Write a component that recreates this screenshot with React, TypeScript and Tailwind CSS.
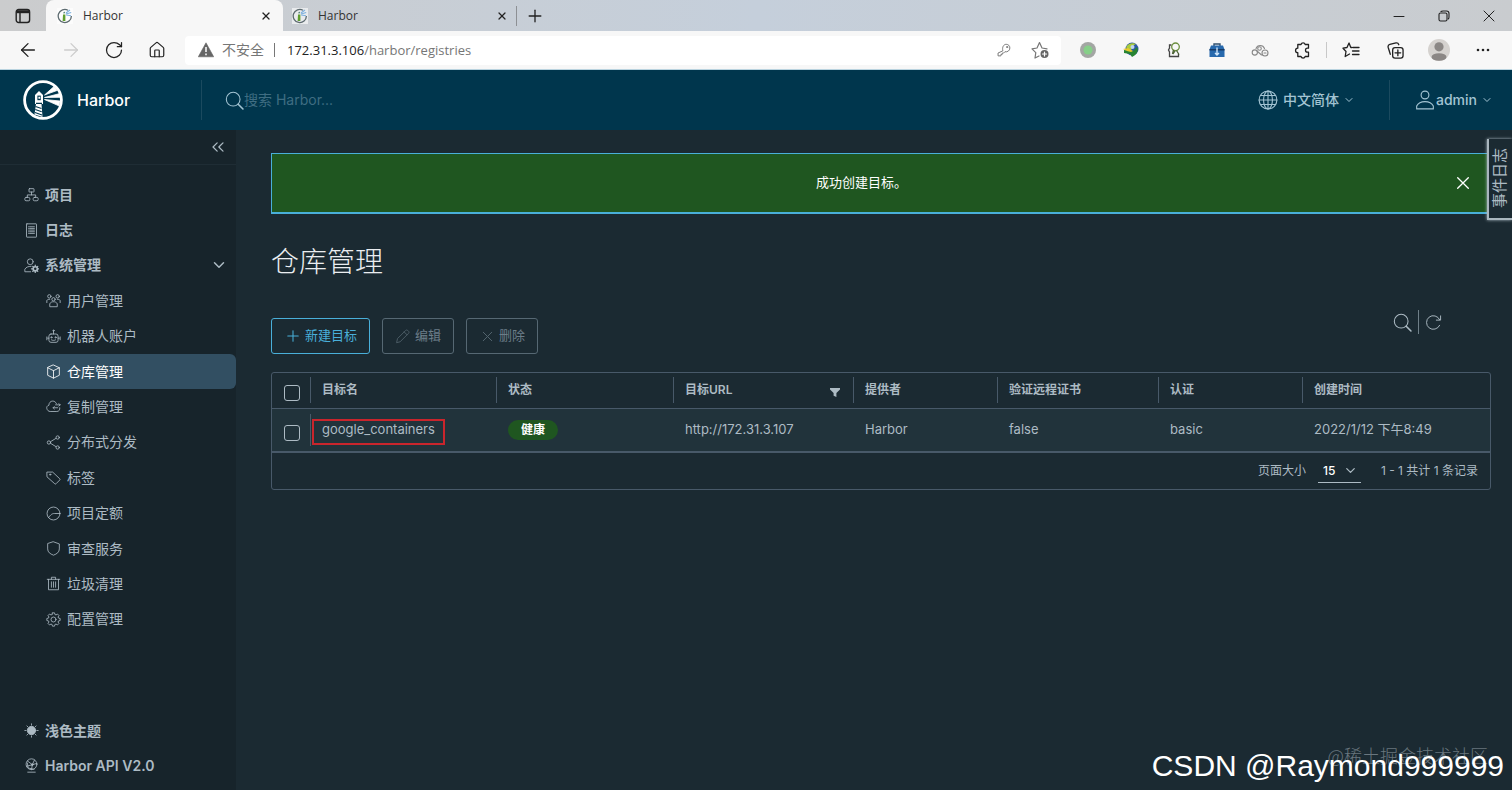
import React, { useState } from 'react';
import {
  ArrowLeft,
  ArrowRight,
  ChevronDown,
  ChevronsLeft,
  House,
  Plus,
  RotateCw,
  X,
} from 'lucide-react';

type IconProps = { className?: string; children?: React.ReactNode; viewBox?: string; strokeWidth?: number };

// Base for all outline icons, drawn on a 36 unit grid
const Icon: React.FC<IconProps> = ({ className = 'w-4 h-4', viewBox = '0 0 36 36', strokeWidth = 2, children }) => (
  <svg
    viewBox={viewBox}
    fill="none"
    stroke="currentColor"
    strokeWidth={strokeWidth}
    strokeLinecap="round"
    strokeLinejoin="round"
    className={`shrink-0 ${className}`}
    aria-hidden="true"
  >
    {children}
  </svg>
);

const GEAR =
  'M15.5 3h5l.9 4 2.6 1.1 3.5-2.2 3.6 3.6-2.2 3.5L30 15.6l4 .9v5l-4 .9-1.1 2.6 2.2 3.5-3.6 3.6-3.5-2.2-2.6 1.1-.9 4h-5l-.9-4-2.6-1.1-3.5 2.2-3.6-3.6L7.1 25 6 22.4l-4-.9v-5l4-.9L7.1 13 4.9 9.5l3.6-3.6L12 8.1 14.6 7z';

const icons = {
  projects: (
    <>
      <rect x="12" y="4" width="12" height="8" rx="1" />
      <rect x="2" y="25" width="12" height="8" rx="3" />
      <rect x="22" y="25" width="12" height="8" rx="3" />
      <path d="M18 12v7M8 25v-6h20v6" />
    </>
  ),
  logs: (
    <>
      <rect x="6" y="2" width="24" height="32" rx="1" />
      <path d="M11 9h2M15 9h10M11 13h2M15 13h10M11 17h2M15 17h10M11 21h2M15 21h10M11 25h2M15 25h10" />
    </>
  ),
  admin: (
    <>
      <circle cx="15" cy="9" r="7" />
      <path d="M16 33H2v-6c3-5 8-7 15-7" />
      <circle cx="27" cy="26" r="5" strokeWidth="4" />
      <path d="M27 17v3M27 32v3M18 26h3M33 26h3M21 20l2 2M31 30l2 2M33 20l-2 2M23 30l-2 2" strokeWidth="3" />
    </>
  ),
  users: (
    <>
      <circle cx="18" cy="15" r="4" />
      <circle cx="8" cy="8" r="4" />
      <circle cx="28" cy="8" r="4" />
      <path d="M9 32v-6c2-4 5-5 9-5s7 1 9 5v6zM2 23v-5c1-2 3-3 7-3M34 23v-5c-1-2-3-3-7-3" />
    </>
  ),
  robot: (
    <>
      <rect x="7" y="12" width="22" height="20" rx="5" />
      <path d="M18 12V5M2 19v7M34 19v7M4 22h3M29 22h3M13 26c3 2 7 2 10 0" />
      <circle cx="18" cy="4" r="1.5" />
      <circle cx="13" cy="20" r="1.5" />
      <circle cx="23" cy="20" r="1.5" />
    </>
  ),
  registries: <path d="M18 2.5L32 9v18l-14 7L4 27V9zM4 9l14 7 14-7M18 16v18" />,
  replication: (
    <>
      <path d="M25 11c-2-4-5-6-9-6-5 0-9 4-9 10-4 1-6 4-5 8 1 4 4 7 8 7h16c5 0 8-4 7-9" />
      <path d="M23 14h11M31 11l3 3-3 3M17 21h11M20 18l-3 3 3 3" />
    </>
  ),
  distribution: (
    <>
      <circle cx="7" cy="18" r="4" />
      <circle cx="28" cy="6" r="4" />
      <circle cx="28" cy="30" r="4" />
      <path d="M11 16l13-8M11 20l13 8" />
    </>
  ),
  tags: (
    <>
      <path d="M3 5h13l17 16c1 1 1 2 0 3l-9 9c-1 1-2 1-3 0L3 17z" />
      <circle cx="10" cy="11" r="1.5" />
    </>
  ),
  quotas: (
    <>
      <circle cx="18" cy="18" r="15.5" />
      <path d="M6 28c6-8 9-10 14-10h13" />
    </>
  ),
  shield: <path d="M18 2l14 5v12c0 8-6 12-14 15C10 31 4 27 4 19V7z" />,
  trash: (
    <>
      <path d="M3 8h30M6 8v25h24V8M13 8V3h10v5M13 14v13M18 14v13M23 14v13" />
    </>
  ),
  config: (
    <>
      <g transform="translate(0 -1)">
        <path d={GEAR} />
      </g>
      <circle cx="18" cy="18" r="6" />
    </>
  ),
  sun: (
    <>
      <circle cx="18" cy="18" r="10" fill="currentColor" />
      <path d="M18 2v3M18 31v3M2 18h3M31 18h3M7 7l2 2M27 27l2 2M29 7l-2 2M9 27l-2 2" />
    </>
  ),
  api: (
    <>
      <circle cx="18" cy="15" r="13" />
      <path d="M8 7l12 9 11-3M20 16l-2 12M20 16L6 20M20 16l5-11M8 12l2 12 14 3M9 34h18" />
      <circle cx="20" cy="16" r="2" fill="currentColor" />
    </>
  ),
};

const subItems = [
  { label: '用户管理', icon: icons.users },
  { label: '机器人账户', icon: icons.robot },
  { label: '仓库管理', icon: icons.registries, active: true },
  { label: '复制管理', icon: icons.replication },
  { label: '分布式分发', icon: icons.distribution },
  { label: '标签', icon: icons.tags },
  { label: '项目定额', icon: icons.quotas },
  { label: '审查服务', icon: icons.shield },
  { label: '垃圾清理', icon: icons.trash },
  { label: '配置管理', icon: icons.config },
];

const columns = [
  { label: '目标名', width: 'w-[186px]' },
  { label: '状态', width: 'w-[177px]' },
  { label: '目标URL', width: 'w-[180px]', filter: true },
  { label: '提供者', width: 'w-[144px]' },
  { label: '验证远程证书', width: 'w-[161px]' },
  { label: '认证', width: 'w-[144px]' },
  { label: '创建时间', width: '' },
];

const Favicon: React.FC = () => (
  <svg viewBox="0 0 16 16" className="w-4 h-4 shrink-0 bg-white/60" aria-hidden="true">
    <path d="M11 2.2A6.6 6.6 0 1 0 14.4 8" fill="none" stroke="#5d6b70" strokeWidth="1.3" />
    <path d="M6 6.5h2.4V13H5.6z" fill="#5f9e2f" />
    <path d="M6 5.2L7.2 3.6l1.2 1.6z" fill="#476" />
    <path d="M9 5l4-3M9.2 6l5-1.5M9.2 7l4.8.8" stroke="#7db0de" strokeWidth="1.1" />
  </svg>
);

const HarborLogo: React.FC = () => (
  <svg viewBox="0 0 40 40" className="w-10 h-10 shrink-0" aria-hidden="true">
    <circle cx="20" cy="20" r="18.4" fill="none" stroke="#fff" strokeWidth="2.8" />
    <path d="M12 15l4-4 4 4v9h-1.5l1 13-8-2.5L13 24h-1z" fill="#fff" />
    <path d="M14.4 15.6h3.4v4.6h-3.4z" fill="#00364d" />
    <path d="M15.4 16.8h1.8v2h-1.8z" fill="#fff" />
    <path d="M12.5 26.5l6 2M12.3 29.5l6.4 2.2M12 32.5l7 2.4M13 23.4h6" stroke="#00364d" strokeWidth="1.1" />
    <path d="M21.5 15L31 6.500l3 4zM21.500 17.500L37 13.500v3.800zM21.500 19.500l15.500 1.500-1.200 4.800z" fill="#fff" stroke="#fff" strokeWidth=".8" />
  </svg>
);

const Magnifier: React.FC<{ className?: string }> = ({ className }) => (
  <Icon className={className}>
    <circle cx="15.5" cy="15.5" r="13" />
    <path d="M25 25l9 9" strokeWidth="3" />
  </Icon>
);

const BrowserTab: React.FC<{ active?: boolean }> = ({ active }) => (
  <div
    className={`flex items-center h-[31px] ${
      active ? 'w-[237px] pl-[11px] pr-[11px] rounded-t-lg bg-[#f7f7f7]' : 'w-[233px] pl-[9px] pr-2 rounded-bl-md'
    }`}
  >
    <Favicon />
    <span className="flex-1 pl-[10px] text-xs text-[#333]">Harbor</span>
    <button aria-label="关闭标签页" className="text-[#222]">
      <X className="w-3 h-3" strokeWidth={2.5} />
    </button>
  </div>
);

const BrowserChrome: React.FC = () => (
  <div className="font-['Open_Sans','Noto_Sans_CJK_SC',sans-serif] text-[#222]">
    <div className="flex items-center h-[31px] bg-linear-to-r from-[#cbcccd] via-[#c5cfdb] to-[#c9cccf]">
      <button aria-label="标签页操作" className="flex items-center justify-center w-[46px] h-[31px]">
        <svg viewBox="0 0 16 16" className="w-4 h-4" fill="none" stroke="#222" strokeWidth="1.4">
          <rect x="1.2" y="1.5" width="13.4" height="13" rx="2.5" />
          <path d="M1.5 3.7h13" strokeWidth="3" />
          <path d="M5 5v9" />
        </svg>
      </button>
      <BrowserTab active />
      <BrowserTab />
      <span className="w-px h-5 bg-[#8d9094]" />
      <button aria-label="新建标签页" className="flex items-center justify-center w-9">
        <Plus className="w-5 h-5" strokeWidth={1.6} />
      </button>
      <div className="flex ml-auto pr-px">
        <button aria-label="最小化" className="flex items-center justify-center w-[45px]">
          <Icon viewBox="0 0 12 12" className="w-3 h-3" strokeWidth={1}>
            <path d="M1 6.500h10" />
          </Icon>
        </button>
        <button aria-label="还原" className="flex items-center justify-center w-[45px]">
          <Icon viewBox="0 0 12 12" className="w-3 h-3" strokeWidth={1.1}>
            <rect x="1" y="3" width="8" height="8" rx="1.5" />
            <path d="M3 1.500C3.500 1 4 1 5 1h3.500C10 1 11 2 11 3.500V7c0 1-.2 1.500-.8 2" />
          </Icon>
        </button>
        <button aria-label="关闭" className="flex items-center justify-center w-[45px]">
          <Icon viewBox="0 0 12 12" className="w-3 h-3" strokeWidth={1}>
            <path d="M1 1l10 10M11 1L1 11" />
          </Icon>
        </button>
      </div>
    </div>

    <div className="flex items-center h-[39px] pl-[6px] pr-[7px] bg-[#f7f7f7] border-b border-[#b9d3df]">
      <button aria-label="后退" className="flex justify-center w-[43px]">
        <ArrowLeft className="w-[22px] h-[22px]" strokeWidth={1.4} />
      </button>
      <button aria-label="前进" disabled className="flex justify-center w-[43px] text-[#cdcdcd]">
        <ArrowRight className="w-[22px] h-[22px]" strokeWidth={1.4} />
      </button>
      <button aria-label="刷新" className="flex justify-center w-[43px]">
        <RotateCw className="w-5 h-5" strokeWidth={1.5} />
      </button>
      <button aria-label="主页" className="flex justify-center w-[43px]">
        <House className="w-[18px] h-[18px]" strokeWidth={1.6} />
      </button>
      <div className="flex flex-1 items-center h-[29px] ml-[7px] mr-[5px] pl-[13px] pr-3 rounded-sm bg-white text-sm text-[#767676]">
        <svg viewBox="0 0 16 16" className="w-4 h-4" aria-hidden="true">
          <path d="M8 .8l7.700 14H.3z" fill="#666" stroke="#666" strokeWidth=".6" strokeLinejoin="round" />
          <path d="M8 5v5M8 11.500v1.700" stroke="#fff" strokeWidth="1.500" />
        </svg>
        <span className="pl-2">不安全</span>
        <span className="w-px h-[14px] ml-[10px] mr-3 bg-[#777]" />
        <span className="flex-1 text-[13px]">
          <span className="text-[#222]">172.31.3.106</span>/harbor/registries
        </span>
        <button aria-label="密码" className="pr-[20px]">
          <Icon viewBox="0 0 16 16" className="w-[14px] h-[14px]" strokeWidth={1.1}>
            <path d="M6.600 8.500C5.600 5 7.500 1.500 10.500 1.500c2.500 0 4.200 1.800 4.200 4.200 0 3-2.800 5-5.700 4.300L7.500 11.500H6V13H4.500v1.700H1.200v-2.800z" />
            <circle cx="11.500" cy="4.600" r=".7" />
          </Icon>
        </button>
        <button aria-label="添加到收藏夹">
          <Icon viewBox="0 0 18 18" className="w-[18px] h-[18px]" strokeWidth={1.2}>
            <path d="M8 15l-4 2 .8-5.400L1 7.800l5-.8L8.500 1.500 11 7l5 .8" />
            <circle cx="13.500" cy="13" r="4" fill="#666" stroke="none" />
            <path d="M13.500 11v4M11.500 13h4" stroke="#fff" />
          </Icon>
        </button>
      </div>
      <button aria-label="扩展一" className="flex justify-center w-[43px]">
        <svg viewBox="0 0 16 16" className="w-4 h-4">
          <circle cx="8" cy="8" r="8" fill="#a3a6a3" />
          <circle cx="8" cy="8" r="4.500" fill="#86cf88" />
        </svg>
      </button>
      <button aria-label="下载管理器" className="flex justify-center w-[43px]">
        <svg viewBox="0 0 16 16" className="w-4 h-4">
          <circle cx="9" cy="7" r="6.500" fill="#2b57a5" />
          <path d="M3 5c3-5 8-4 10-3-3 1-4 3-4 5l-3 2z" fill="#aacb3c" />
          <path d="M1 8l9 1 4-4c2 3 0 8-5 10L7 12 1 11z" fill="#288432" />
          <path d="M0 7l5-1 5 3-2 1-4-1z" fill="#e9c92b" />
          <circle cx="9.500" cy="5" r="2" fill="#bcd4ee" />
        </svg>
      </button>
      <button aria-label="密码扩展" className="flex justify-center w-[43px]">
        <svg viewBox="0 0 16 16" className="w-4 h-4" fill="none" strokeWidth="1.300">
          <path d="M5.500 3H3.500v3l-1 2 1 2v4.500h9V12" stroke="#444" />
          <circle cx="9.500" cy="4.800" r="3.800" stroke="#6b8e3d" />
          <path d="M7.500 8L6.500 12M10.500 8.500l2.500 4M7 12l2-3" stroke="#4b6134" />
        </svg>
      </button>
      <button aria-label="工具箱" className="flex justify-center w-[43px]">
        <svg viewBox="0 0 16 16" className="w-4 h-4">
          <path d="M5 4V2h6v2" fill="none" stroke="#31506f" strokeWidth="1.400" />
          <path d="M2 3.500h12l1.500 4V15H.5V7.500z" fill="#2769ad" />
          <path d="M.5 7h15v1.500H.5z" fill="#173a66" />
          <path d="M8 5.500v7M6 11l2 2 2-2" stroke="#cfe6fb" strokeWidth="1.400" fill="none" />
        </svg>
      </button>
      <button aria-label="云扩展" className="flex justify-center w-[43px]">
        <Icon viewBox="0 0 18 16" className="w-[18px] h-4 text-[#888]" strokeWidth={1.1}>
          <path d="M5 6.500a4.500 4.500 0 0 1 8.500 0" />
          <circle cx="3.800" cy="10.500" r="2.600" />
          <circle cx="8.500" cy="6.500" r="1.800" />
          <circle cx="14" cy="11" r="3" />
          <path d="M13 11h2M6 9l4.500 4" />
        </Icon>
      </button>
      <button aria-label="扩展" className="flex justify-center w-[43px]">
        <Icon viewBox="0 0 18 18" className="w-[18px] h-[18px]" strokeWidth={1.3}>
          <path d="M7 3.500a2.200 2.200 0 0 1 4.200 0h3.300v3.700h-1a2 2 0 0 0 0 4h1v4.300h-3.300a2.200 2.200 0 0 1-4.200 0H3.800v-3.800a2.200 2.200 0 0 1 0-4.500V3.500z" />
        </Icon>
      </button>
      <span className="w-px h-4 mx-[2px] bg-[#c8c8c8]" />
      <button aria-label="收藏夹" className="flex justify-center w-11">
        <Icon viewBox="0 0 18 18" className="w-[18px] h-[18px]" strokeWidth={1.3}>
          <path d="M10 6.500H8.800L7 2 5 6.500l-4 .7 3 3.300-.8 5L7.500 13M11 6.500h6M10.500 10H17M10.500 13.500H17" />
        </Icon>
      </button>
      <button aria-label="集锦" className="flex justify-center w-11">
        <Icon viewBox="0 0 18 18" className="w-[17px] h-[17px]" strokeWidth={1.4}>
          <rect x="6" y="6" width="11" height="11" rx="2.500" />
          <path d="M11.500 8.500v6M8.500 11.500h6M3.500 13L1.200 5.500C.9 4 1.500 3 3 2.600L9.500 1c1.500-.3 2.500.4 3 1.900" />
        </Icon>
      </button>
      <button aria-label="个人资料" className="flex justify-center w-11">
        <svg viewBox="0 0 22 22" className="w-[22px] h-[22px]">
          <circle cx="11" cy="11" r="11" fill="#d5d2cf" />
          <circle cx="11" cy="7.800" r="4.600" fill="#8b8785" />
          <ellipse cx="11" cy="18" rx="7.500" ry="3.800" fill="#8b8785" />
        </svg>
      </button>
      <button aria-label="更多" className="flex justify-center w-11">
        <svg viewBox="0 0 14 4" className="w-[14px] h-1" fill="#222">
          <circle cx="2" cy="2" r="1.300" />
          <circle cx="7" cy="2" r="1.300" />
          <circle cx="12" cy="2" r="1.300" />
        </svg>
      </button>
    </div>
  </div>
);

const Header: React.FC = () => (
  <header className="flex items-center h-[60px] bg-[#00364d] text-[#a3c4d3]">
    <a href="#" className="flex items-center w-[201px] pl-[23px] text-white font-medium text-base">
      <HarborLogo />
      <span className="pl-[14px]">Harbor</span>
    </a>
    <span className="w-px h-10 bg-[#1b4a5f]" />
    <label className="flex flex-1 items-center pl-[23px]">
      <Magnifier className="w-[19px] h-[19px]" />
      <input
        type="text"
        aria-label="搜索"
        placeholder="搜索 Harbor..."
        className="w-60 bg-transparent text-sm outline-none placeholder:text-[#3f6d82]"
      />
    </label>
    <button className="flex items-center pr-[34px] text-sm font-medium">
      <Icon className="w-5 h-5">
        <circle cx="18" cy="18" r="16" />
        <ellipse cx="18" cy="18" rx="8" ry="16" />
        <path d="M18 2v32M2 18h32M5 10h26M5 26h26" />
      </Icon>
      <span className="pl-[5px] pr-1">中文简体</span>
      <ChevronDown className="w-3 h-3" />
    </button>
    <span className="w-px h-10 bg-[#1b4a5f]" />
    <button className="flex items-center pl-[25px] pr-[19px] text-sm font-medium">
      <Icon className="w-5 h-5">
        <circle cx="18" cy="9" r="7" />
        <path d="M3 34v-5c3-6 8-8 15-8s12 2 15 8v5z" />
      </Icon>
      <span className="pl-px pr-1">admin</span>
      <ChevronDown className="w-3 h-3" />
    </button>
  </header>
);

const Sidebar: React.FC<{ open: boolean; onToggle: () => void }> = ({ open, onToggle }) => (
  <aside className="flex flex-col w-[236px] shrink-0 bg-[#17242b] text-sm text-[#adbbc4]">
    <div className="flex justify-end h-[35px] pr-[8px] border-b border-[#1f2d35]">
      <button aria-label="收起菜单">
        <ChevronsLeft className="w-5 h-5" strokeWidth={1.5} />
      </button>
    </div>
    <nav className="grid grid-rows-13 h-[460px] mt-3">
      <a href="#" className="flex items-center pl-6 gap-[6px] font-bold">
        <Icon className="w-[15px] h-[15px]">{icons.projects}</Icon>项目
      </a>
      <a href="#" className="flex items-center pl-6 gap-[6px] font-bold">
        <Icon className="w-[15px] h-[15px]">{icons.logs}</Icon>日志
      </a>
      <button onClick={onToggle} className="flex items-center pl-6 pr-2 gap-[6px] font-bold">
        <Icon className="w-[15px] h-[15px]">{icons.admin}</Icon>
        <span className="flex-1 text-left">系统管理</span>
        <ChevronDown className="w-[18px] h-[18px]" />
      </button>
      {open &&
        subItems.map((item) => (
          <a
            key={item.label}
            href="#"
            className={`flex items-center pl-[46px] gap-[6px] rounded-r-md ${
              item.active ? 'bg-[#324f62] text-white' : ''
            }`}
          >
            <Icon className="w-[15px] h-[15px]">{item.icon}</Icon>
            {item.label}
          </a>
        ))}
    </nav>
    <div className="mt-auto pb-[7px] font-bold">
      <button className="flex items-center h-[35px] pl-6 gap-[6px]">
        <Icon className="w-[15px] h-[15px]">{icons.sun}</Icon>浅色主题
      </button>
      <a href="#" className="flex items-center h-[35px] pl-6 gap-[6px] font-semibold">
        <Icon className="w-[15px] h-[15px]">{icons.api}</Icon>Harbor API V2.0
      </a>
    </div>
  </aside>
);

const CheckBox: React.FC<{ label: string }> = ({ label }) => (
  <input
    type="checkbox"
    aria-label={label}
    className="block appearance-none w-4 h-4 ml-3 mt-[6px] rounded-[3px] border border-[#adbbc4] checked:bg-[#49afd9]"
  />
);

const RegistryTable: React.FC = () => (
  <div className="mt-[18px] rounded-[3px] border border-[#485969] text-[13px]">
    <table className="w-full table-fixed text-left">
      <thead>
        <tr className="h-[35px] border-b border-[#485969]">
          <th className="w-[38px] p-0">
            <CheckBox label="全选" />
          </th>
          {columns.map((col) => (
            <th key={col.label} className={`p-0 font-semibold text-xs ${col.width}`}>
              <div className="flex items-center justify-between h-[26px] pl-[11px] pr-[13px] border-l border-[#485969]">
                {col.label}
                {col.filter && (
                  <button aria-label="筛选" className="pt-1">
                    <svg viewBox="0 0 10 9" className="w-[10px] h-[9px]" fill="currentColor">
                      <path d="M0 0h10v1.500L6.400 5v4L3.600 7.800V5L0 1.500z" />
                    </svg>
                  </button>
                )}
              </div>
            </th>
          ))}
        </tr>
      </thead>
      <tbody>
        <tr className="h-11 border-b-2 border-[#485969] bg-[#21333b]">
          <td className="p-0">
            <CheckBox label="选择 google_containers" />
          </td>
          <td className="p-0">
            <div className="flex items-center h-8 border-l border-[#485969]">
              <a href="#" className="flex items-center h-[26px] mt-1 ml-px px-2 border-2 border-[#c9252c]">
                <span className="pb-[5px]">google_containers</span>
              </a>
            </div>
          </td>
          <td className="p-0 pl-3">
            <span className="inline-flex items-center justify-center w-[50px] h-5 rounded-full bg-[#1f5620] text-xs font-bold text-white">
              健康
            </span>
          </td>
          <td className="p-0 pl-3">http://172.31.3.107</td>
          <td className="p-0 pl-3">Harbor</td>
          <td className="p-0 pl-3">false</td>
          <td className="p-0 pl-3">basic</td>
          <td className="p-0 pl-3">2022/1/12 下午8:49</td>
        </tr>
      </tbody>
    </table>
    <div className="flex items-center justify-end h-9 pr-3 text-xs">
      <label htmlFor="page-size">页面大小</label>
      <div className="relative ml-3 mr-5">
        <select
          id="page-size"
          defaultValue="15"
          className="block appearance-none w-[43px] h-6 pl-[5px] border-b border-[#adbbc4] bg-transparent font-medium text-white outline-none"
        >
          <option>15</option>
          <option>25</option>
          <option>50</option>
        </select>
        <ChevronDown className="absolute right-[3px] top-1 w-[15px] h-[15px] pointer-events-none" />
      </div>
      <span>1 - 1 共计 1 条记录</span>
    </div>
  </div>
);

const App: React.FC = () => {
  const [open, setOpen] = useState(true);
  const [showAlert, setShowAlert] = useState(true);

  return (
    <div className="relative flex flex-col min-h-screen overflow-hidden bg-[#1b2a32] text-[#adbbc4] font-['Inter','Noto_Sans_CJK_SC',sans-serif]">
      <BrowserChrome />
      <Header />
      <div className="flex flex-1">
        <Sidebar open={open} onToggle={() => setOpen(!open)} />
        <main className="flex-1 min-w-0 pt-[23px] pl-[35px] pr-[21px]">
          {showAlert && (
            <div
              role="alert"
              className="flex items-center h-[61px] pl-[14px] pr-[21px] border border-b-2 border-[#49afd9] bg-[#1f5620] text-[13px] text-white"
            >
              <span className="flex-1 pr-5 text-center">成功创建目标。</span>
              <button aria-label="关闭提示" onClick={() => setShowAlert(false)}>
                <Icon viewBox="0 0 12 12" className="w-3 h-3" strokeWidth={1.3}>
                  <path d="M.7.7l10.600 10.600M11.300.7L.7 11.300" />
                </Icon>
              </button>
            </div>
          )}
          <h2 className="mt-7 text-[28px] leading-10 font-light text-[#eaedf0]">仓库管理</h2>
          <div className="flex items-start mt-9">
            <div className="flex gap-3 text-[13px]">
              <button className="flex items-center h-9 px-3 gap-[3px] rounded-[3px] border border-[#49afd9] text-[#49afd9]">
                <Plus className="w-[18px] h-[18px]" strokeWidth={1.4} />
                新建目标
              </button>
              <button disabled className="flex items-center h-9 px-3 gap-[5px] rounded-[3px] border border-[#566873] text-[#6c7d88]">
                <Icon className="w-[15px] h-[15px] text-[#53646e]">
                  <path d="M4 32l2-9L26 3c1-1 3-1 4 0l3 3c1 1 1 3 0 4L13 30zM22 7l7 7" />
                </Icon>
                编辑
              </button>
              <button disabled className="flex items-center h-9 px-3 gap-[3px] rounded-[3px] border border-[#566873] text-[#6c7d88]">
                <X className="w-[17px] h-[17px] text-[#53646e]" strokeWidth={1.4} />
                删除
              </button>
            </div>
            <div className="flex items-center ml-auto mr-[49px] h-2">
              <button aria-label="搜索" className="pr-[6px]">
                <Magnifier className="w-[19px] h-[19px]" />
              </button>
              <span className="w-px h-6 bg-[#6f7f88]" />
              <button aria-label="刷新列表" className="pl-[6px]">
                <Icon className="w-[17px] h-[17px]">
                  <path d="M31 12A14.500 14.500 0 1 0 31 24M33 4v9H24" />
                </Icon>
              </button>
            </div>
          </div>
          <RegistryTable />
        </main>
      </div>

      <button className="absolute right-0 top-[139px] flex items-center justify-center w-[25px] h-[81px] border-l-2 border-b-2 border-[#a9b6be] bg-[#1b2a32] shadow-[0_0_3px_#adbbc4] text-[15px]">
        <span className="[writing-mode:vertical-rl] [text-orientation:sideways] rotate-180">事件日志</span>
      </button>

      {/* watermarks, one over the other */}
      <div className="absolute right-6 bottom-[23px] text-lg leading-6 text-[#69767e] font-['Noto_Sans_CJK_SC',sans-serif] font-light whitespace-nowrap">
        @稀土掘金技术社区
      </div>
      <div className="absolute right-2 bottom-1 text-[30px] leading-10 text-white font-['Liberation_Sans',sans-serif] whitespace-nowrap">
        CSDN @Raymond999999
      </div>
    </div>
  );
};

export default App;
